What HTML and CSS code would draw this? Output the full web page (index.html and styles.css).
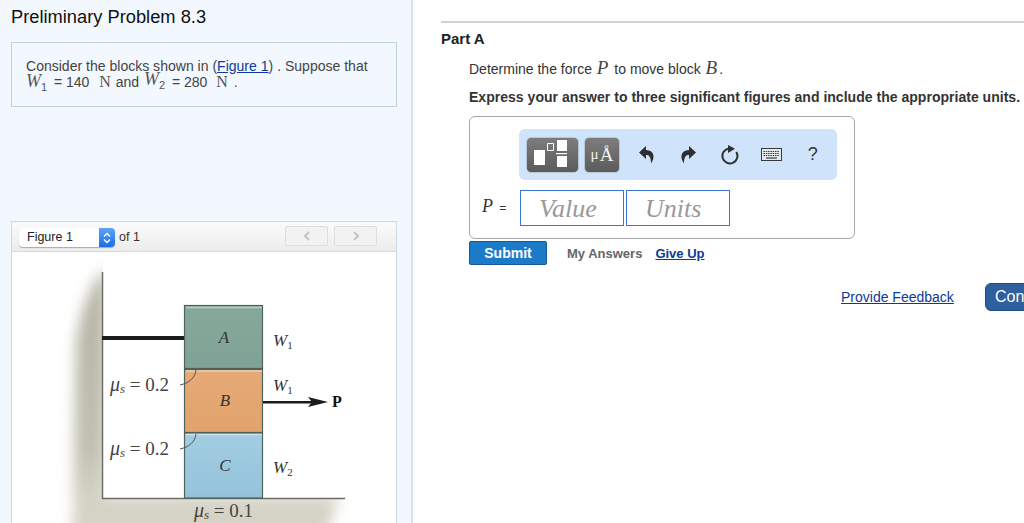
FILE: index.html
```html
<!DOCTYPE html>
<html lang="en">
<head>
<meta charset="utf-8">
<title>Preliminary Problem 8.3</title>
<link rel="stylesheet" href="styles.css">
</head>
<body>
<div class="page">
  <aside class="left">
    <h1 class="title">Preliminary Problem 8.3</h1>
    <div class="problem">
      <div class="problem-line">Consider the blocks shown in (<a href="#" class="link">Figure 1</a>) . Suppose that</div>
      <div class="problem-line second"><span class="m mw"><i class="mi">W</i><sub class="msub">1</sub></span> = 140 &nbsp;<span class="m n1">N</span> and <span class="m mw raised"><i class="mi">W</i><sub class="msub">2</sub></span> = 280 &nbsp;<span class="m n2">N</span> .</div>
    </div>
    <section class="figure">
      <div class="fig-bar">
        <div class="select"><span class="select-label">Figure 1</span><span class="select-arrows"><svg width="10" height="14" viewBox="0 0 10 14"><path d="M2 5.500 5 2.500 8 5.500M2 8.500 5 11.500 8 8.500" fill="none" stroke="#fff" stroke-width="1.400"/></svg></span></div>
        <span class="of">of 1</span>
        <div class="pager">
          <span class="page-btn"><svg width="8" height="10" viewBox="0 0 8 10"><path d="M6 1 2 5 6 9" fill="none" stroke="#c4c4c4" stroke-width="2"/></svg></span>
          <span class="page-btn"><svg width="8" height="10" viewBox="0 0 8 10"><path d="M2 1 6 5 2 9" fill="none" stroke="#c4c4c4" stroke-width="2"/></svg></span>
        </div>
      </div>
      <svg class="diagram" width="384" height="272" viewBox="12 252 384 272">
        <defs>
          <filter id="soft" x="-20%" y="-20%" width="140%" height="140%"><feGaussianBlur stdDeviation="7"/></filter>
          <linearGradient id="gs" x1="0" y1="0" x2="0" y2="1"><stop offset="0" stop-color="#b4b2a2"/><stop offset=".62" stop-color="#c2c0b1"/><stop offset=".8" stop-color="#d5d3c6"/></linearGradient>
          <linearGradient id="ga" x1="0" y1="0" x2="0" y2="1"><stop offset="0" stop-color="#86a89b"/><stop offset="1" stop-color="#7fa396"/></linearGradient>
          <linearGradient id="gb" x1="0" y1="0" x2="0" y2="1"><stop offset="0" stop-color="#e6aa76"/><stop offset="1" stop-color="#e2a36d"/></linearGradient>
          <linearGradient id="gc" x1="0" y1="0" x2="0" y2="1"><stop offset="0" stop-color="#a4cde2"/><stop offset="1" stop-color="#93c3dc"/></linearGradient>
        </defs>
        <path d="M106 268 C92 282 80 310 76 345 L72 560 L322 560 Q330 520 340 496 L106 496 Z" fill="url(#gs)" filter="url(#soft)"/>
        <rect x="103" y="262" width="250" height="236" fill="#fff"/>
        <path d="M102.500 272V498.500H345" fill="none" stroke="#6d6d68" stroke-width="1.500"/>
        <rect x="102" y="336" width="82" height="4" fill="#1c1c1c"/>
        <rect class="blk-edge" x="184.500" y="305.500" width="78" height="63" fill="url(#ga)"/>
        <rect class="blk-edge" x="184.500" y="369.500" width="78" height="63" fill="url(#gb)"/>
        <rect class="blk-edge" x="184.500" y="433" width="78" height="65" fill="url(#gc)"/>
        <path d="M186 307.500H262M186 371H262M186 434.500H262" stroke="#fff" stroke-opacity=".45" stroke-width="1.500"/>
        <path d="M196 370C195 378 189 383 180 385M196 434C195 442 189 447 180 449" fill="none" stroke="#55534f" stroke-width="1"/>
        <rect x="263" y="401" width="49" height="2.500" fill="#1c1c1c"/>
        <path d="M308 397 328 402 308 407 312 402Z" fill="#1c1c1c"/>
        <text class="fig-i" x="224" y="343" text-anchor="middle">A</text>
        <text class="fig-i" x="225" y="406" text-anchor="middle">B</text>
        <text class="fig-i" x="225" y="471" text-anchor="middle">C</text>
        <text class="fig-w" x="273" y="346">W<tspan class="fig-s" dy="3">1</tspan></text>
        <text class="fig-w" x="273" y="391">W<tspan class="fig-s" dy="3">1</tspan></text>
        <text class="fig-w" x="273" y="473">W<tspan class="fig-s" dy="3">2</tspan></text>
        <text class="fig-p" x="332" y="407">P</text>
        <text class="fig-m" x="110" y="391"><tspan class="it">μ</tspan><tspan class="it fig-sub" dy="2">s</tspan><tspan dy="-2"> = 0.2</tspan></text>
        <text class="fig-m" x="110" y="455"><tspan class="it">μ</tspan><tspan class="it fig-sub" dy="2">s</tspan><tspan dy="-2"> = 0.2</tspan></text>
        <text class="fig-m" x="194" y="517"><tspan class="it">μ</tspan><tspan class="it fig-sub" dy="2">s</tspan><tspan dy="-2"> = 0.1</tspan></text>
      </svg>
    </section>
  </aside>
  <main class="right">
    <h2 class="part">Part A</h2>
    <div class="part-body">
      <p class="q"><span>Determine the force <i class="mq">P</i> to move block <i class="mq">B</i>.</span></p>
      <p class="instr">Express your answer to three significant figures and include the appropriate units.</p>
      <div class="answer">
        <div class="tools">
          <span class="tool tool-wide"><svg width="51" height="34" viewBox="0 0 51 34"><path d="M7 12h11v15H7zM30 2h10v11H30zM29 15h11v1.200H29zM30 18h10v11H30z" fill="#fff"/><path d="M20.500 5.500h6v7h-6z" fill="none" stroke="#fff"/></svg></span>
          <span class="tool tool-unit"><span class="mu">μ</span><span class="ang">Å</span></span>
          <span class="icon"><svg width="16" height="18" viewBox="0 0 16 18"><path d="M7 0 0 6.500 7 13V9c3 0 5 1.500 5 8.500C16 12 16 4.500 7 4Z" fill="#2f2f2f"/></svg></span>
          <span class="icon"><svg width="16" height="18" viewBox="0 0 16 18"><path d="M9 0l7 6.500L9 13V9c-3 0-5 1.500-5 8.500C0 12 0 4.500 9 4Z" fill="#2f2f2f"/></svg></span>
          <span class="icon"><svg width="20" height="20" viewBox="0 0 20 20"><path d="M16.300 7A7.500 7.500 0 1 1 9 3.500" fill="none" stroke="#2f2f2f" stroke-width="2"/><path d="M8 0l7 3.700L8 8Z" fill="#2f2f2f"/></svg></span>
          <span class="icon"><svg width="21" height="13" viewBox="0 0 21 13"><rect x=".5" y=".5" width="20" height="12" fill="#e4ebef" stroke="#3a3a3a"/><path d="M2.500 3.500h16M2.500 5.500h16M2.500 7.500h16" stroke="#3a3a3a" stroke-dasharray="1.500 .8"/><path d="M5 10h11" stroke="#3a3a3a" stroke-width="1.200"/></svg></span>
          <span class="icon help">?</span>
        </div>
        <div class="answer-row">
          <span class="var"><i class="mv">P</i> =</span>
          <span class="field">Value</span>
          <span class="field">Units</span>
        </div>
      </div>
      <div class="actions">
        <button class="submit" type="button">Submit</button>
        <span class="my">My Answers</span>
        <a href="#" class="giveup">Give Up</a>
      </div>
    </div>
    <div class="footer">
      <a href="#" class="link feedback">Provide Feedback</a>
      <button class="continue" type="button">Continue</button>
    </div>
  </main>
</div>
</body>
</html>
```
FILE: styles.css
```css
* { box-sizing: border-box; }
html, body { margin: 0; height: 100%; overflow: hidden; background: #fff; }
body { font-family: "Liberation Sans", Arial, sans-serif; color: #333; }
.page { display: flex; width: 1024px; height: 523px; overflow: hidden; }
.left { flex: 0 0 413px; height: 523px; padding: 0 14px 0 11px; background: #f3f8ff; border-right: 2px solid #d4e2f2; overflow: hidden; }
.title { margin: 0; padding-top: 6px; height: 42px; font-size: 18.300px; line-height: 21px; font-weight: 400; color: #111; }
.problem { height: 65px; padding: 15px 14px 0; border: 1px solid #bcd0e2; font-size: 14.040px; line-height: 16px; color: #444; }
.problem-line { height: 16px; white-space: nowrap; }
.second { margin-top: -1px; }
.m { font-family: "Liberation Serif", serif; font-size: 16px; color: #555; }
.mw { display: inline-block; width: 24px; }
.n1 { margin: 0 1px 0 2px; }
.n2 { margin: 0 2px 0 1px; }
.raised { position: relative; top: -2px; margin-left: 1px; }
.mi { font-size: 18px; }
.msub { font-size: 11px; line-height: 0; font-family: "Liberation Sans", sans-serif; }
.link { color: #0b3a9c; text-decoration: underline; }
.figure { margin-top: 114px; border: 1px solid #c9d9ea; border-bottom: 0; height: 302px; background: #fff; }
.fig-bar { display: flex; align-items: center; height: 30px; padding: 0 19px 0 7px; background: linear-gradient(#fbfbfb, #ececec); border-bottom: 1px solid #cfdbe8; }
.select { display: flex; width: 96px; height: 19px; margin-top: 2px; background: #fff; border-radius: 4px; box-shadow: 0 1px 1px #a9a9a9; overflow: hidden; font-size: 12.500px; line-height: 19px; color: #222; }
.select-label { flex: 1; padding-left: 8px; }
.select-arrows { display: flex; align-items: center; justify-content: center; width: 16px; background: linear-gradient(#5fa2f6, #1d6fe6); }
.of { margin-left: 4px; font-size: 12.500px; color: #333; }
.pager { display: flex; gap: 6px; margin: 0 0 2px auto; }
.page-btn { display: flex; align-items: center; justify-content: center; width: 43px; height: 20px; border: 1px solid #dedede; border-radius: 2px; background: #f2f2f2; }
.diagram { display: block; }
.blk-edge { stroke: #4f625c; stroke-width: 1.200; }
.fig-i { font: italic 17px "Liberation Serif", serif; fill: #333; }
.fig-w { font: italic 17px "Liberation Serif", serif; fill: #333; }
.fig-s { font-size: 11px; font-style: normal; }
.fig-p { font: bold 16px "Liberation Serif", serif; fill: #111; }
.fig-m { font: 19px "Liberation Serif", serif; fill: #444; }
.it { font-style: italic; font-size: 20px; }
.it.fig-sub { font-size: 13px; }
.right { flex: 1; min-width: 0; padding: 21px 0 0 28px; overflow: hidden; }
.part { margin: 0; height: 31px; padding-top: 8px; border-top: 2px solid #d2d2d2; font-size: 15px; line-height: 16px; font-weight: 700; color: #222; }
.part-body { padding-left: 28px; }
.q { margin: 0; height: 28px; padding-top: 7px; font-size: 14px; line-height: 18px; color: #333; white-space: nowrap; }
.mq { margin: 0 2px 0 1px; font-family: "Liberation Serif", serif; font-size: 19px; color: #444; }
.mv { margin-right: 3px; font-family: "Liberation Serif", serif; font-size: 18px; color: #333; }
.instr { margin: 0; height: 36px; padding-top: 9px; font-size: 14.050px; line-height: 16px; font-weight: 700; color: #333; white-space: nowrap; }
.answer { width: 386px; height: 123px; padding: 12px 0 0 49px; border: 1px solid #a8a8a8; border-radius: 6px; }
.tools { display: flex; align-items: center; width: 318px; height: 51px; padding-left: 7px; background: #cfe4fb; border-radius: 6px; }
.tool { display: flex; align-items: center; justify-content: center; height: 36px; border-radius: 5px; background: linear-gradient(#7d7d7d, #5b5b5b); color: #f2f2f2; border: 1px solid #b8c6d4; }
.tool-wide { width: 53px; }
.tool-unit { width: 36px; margin: 0 6px 0 5px; font-family: "Liberation Serif", serif; }
.mu { font-size: 15px; }
.ang { font-size: 19px; margin-left: 1px; }
.icon { display: flex; align-items: center; justify-content: center; flex: 0 0 41.500px; }
.help { font-size: 18px; color: #333; }
.answer-row { display: flex; align-items: center; gap: 2px; height: 36px; margin: 10px 0 0 -37px; }
.var { width: 37px; margin: -4px -1px 0 0; font-size: 12px; color: #333; white-space: nowrap; }
.field { display: block; width: 104px; height: 36px; border: 1.500px solid #3a75d6; padding-left: 18px; background: #fff; font: italic 26px/35px "Liberation Serif", serif; color: #999; }
.actions { display: flex; align-items: center; height: 24px; margin-top: 2px; font-size: 13px; font-weight: 700; }
.submit { width: 78px; height: 24px; padding: 0; background: #1c7bc9; border: 1px solid #155a96; border-radius: 2px; color: #fff; font: 700 14px "Liberation Sans", sans-serif; }
.my { margin-left: 20px; color: #666; }
.giveup { margin-left: 13px; color: #0b3a9c; }
.footer { display: flex; align-items: center; height: 28px; margin-top: 18px; padding-left: 400px; }
.feedback { flex: none; width: 113px; font-size: 14px; white-space: nowrap; }
.continue { flex: none; width: 90px; height: 28px; margin-left: 31px; padding: 0 0 0 9px; background: #2e5f9e; border: 1px solid #1f4a85; border-radius: 6px; color: #fff; font: 16px "Liberation Sans", sans-serif; text-align: left; }
```
